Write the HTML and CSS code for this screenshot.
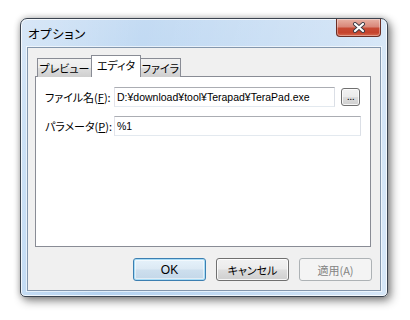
FILE: index.html
```html
<!DOCTYPE html>
<html lang="ja">
<head>
<meta charset="utf-8">
<link rel="stylesheet" href="styles.css">
</head>
<body>
<div class="window">
  <div class="titlebar">
    <span class="title">オプション</span>
    <div class="close">
      <svg width="14" height="11" viewBox="0 0 14 11">
        <path d="M3 2 L11 9 M11 2 L3 9" stroke="#3b3b45" stroke-width="4" stroke-linecap="round" fill="none"/>
        <path d="M3 2 L11 9 M11 2 L3 9" stroke="#ffffff" stroke-width="2.2" stroke-linecap="round" fill="none"/>
      </svg>
    </div>
  </div>
  <div class="client">
    <div class="tabs">
      <div class="tab tab-first">プレビュー</div>
      <div class="tab tab-active">エディタ</div>
      <div class="tab tab-last">ファイラ</div>
    </div>
    <div class="panel">
      <div class="form">
        <label class="lbl">ファイル名(<u>F</u>):</label>
        <div class="row">
          <div class="field field-short">D:¥download¥tool¥Terapad¥TeraPad.exe</div>
          <div class="btn btn-browse">...</div>
        </div>
        <label class="lbl">パラメータ(<u>P</u>):</label>
        <div class="row">
          <div class="field field-long">%1</div>
        </div>
      </div>
    </div>
    <div class="buttons">
      <div class="btn btn-default">OK</div>
      <div class="btn">キャンセル</div>
      <div class="btn btn-disabled">適用(A)</div>
    </div>
  </div>
</div>
</body>
</html>
```
FILE: styles.css
```css
html, body {
  margin: 0;
  padding: 0;
  background: #ffffff;
}
body {
  width: 410px;
  height: 320px;
  overflow: hidden;
  font-family: "Noto Sans CJK JP", "Liberation Sans", sans-serif;
  font-size: 12px;
  color: #000;
}
.window {
  margin: 18px 0 0 20px;
  width: 368px;
  height: 279px;
  box-sizing: border-box;
  border: 1px solid #3b4450;
  border-radius: 7px 7px 5px 5px;
  background:
    linear-gradient(100deg, rgba(255,255,255,0.35) 0%, rgba(255,255,255,0) 30%, rgba(255,255,255,0.25) 75%, rgba(255,255,255,0.45) 100%),
    linear-gradient(to bottom, #c4dbf3 0%, #b8d5f2 40%, #b5d3f1 100%);
  box-shadow: inset 0 0 0 1px rgba(255,255,255,0.75), 3px 4px 10px rgba(0,0,0,0.45), 0 0 6px rgba(0,0,0,0.25);
  padding: 0 6px 5px 6px;
  display: flex;
  flex-direction: column;
}
.titlebar {
  height: 28px;
  display: flex;
  align-items: flex-start;
  justify-content: space-between;
  flex: none;
}
.title {
  margin-top: 5px;
  margin-left: 1px;
  font-size: 12.5px;
  color: #000;
  font-feature-settings: "palt";
  letter-spacing: 0.6px;
}
.close {
  width: 45px;
  height: 18px;
  box-sizing: border-box;
  border: 1px solid #6b2e25;
  border-top: none;
  border-radius: 0 0 4px 4px;
  background: linear-gradient(to bottom, #e8b1a4 0%, #d9887a 45%, #c74a34 55%, #c5432c 80%, #d66a4f 100%);
  box-shadow: inset 0 0 0 1px rgba(255,255,255,0.35);
  display: flex;
  align-items: center;
  justify-content: center;
}
.close svg { display: block; }
.client {
  flex: 1;
  box-sizing: border-box;
  background: #f0f0f0;
  border: 1px solid #8497ad;
  box-shadow: 0 0 0 1px rgba(255,255,255,0.6);
  padding: 8px 9px 9px 7px;
  display: flex;
  flex-direction: column;
}
.tabs {
  display: flex;
  align-items: flex-end;
  height: 21px;
  padding-left: 2px;
  position: relative;
  z-index: 1;
  margin-bottom: -1px;
}
.tab {
  height: 19px;
  box-sizing: border-box;
  border: 1px solid #898c95;
  border-bottom: none;
  background: linear-gradient(to bottom, #f2f2f2 0%, #ebebeb 50%, #dddddd 51%, #cfcfcf 100%);
  font-size: 11px;
  font-feature-settings: "palt";
  line-height: 19px;
  text-align: center;
  margin-left: -1px;
  white-space: nowrap;
}
.tab-first { margin-left: 0; width: 55px; }
.tab-active {
  height: 22px;
  background: #ffffff;
  line-height: 19px;
  width: 50px;
  position: relative;
  z-index: 2;
}
.tab-last { width: 41px; }
.panel {
  height: 171px;
  box-sizing: border-box;
  border: 1px solid #898c95;
  background: #ffffff;
  padding: 10px 9px 0 9px;
}
.form {
  display: grid;
  grid-template-columns: 69px 1fr;
  row-gap: 9px;
  align-items: center;
}
.lbl {
  font-size: 11px;
  font-feature-settings: "palt";
  white-space: nowrap;
}
.lbl u { text-decoration-thickness: 1px; text-underline-offset: 1px; }
.row {
  display: flex;
  align-items: center;
  gap: 6px;
}
.field {
  height: 20px;
  box-sizing: border-box;
  border: 1px solid #dde1e6;
  border-top-color: #abadb3;
  border-left-color: #e2e3ea;
  border-right-color: #dbdfe6;
  border-bottom-color: #e3e9ef;
  background: #fff;
  font-family: "Liberation Sans", sans-serif;
  font-size: 10.5px;
  line-height: 18px;
  padding: 0 2px;
  white-space: nowrap;
}
.field-short { width: 221px; }
.field-long { width: 247px; }
.btn {
  width: 73px;
  height: 23px;
  box-sizing: border-box;
  border: 1px solid #707070;
  border-radius: 3px;
  background: linear-gradient(to bottom, #f2f2f2 0%, #ebebeb 48%, #dddddd 52%, #cfcfcf 100%);
  box-shadow: inset 0 0 0 1px rgba(255,255,255,0.8);
  display: flex;
  align-items: center;
  justify-content: center;
  font-size: 11px;
  font-feature-settings: "palt";
}
.btn-browse {
  width: 19px;
  height: 18px;
  font-family: "Liberation Sans", sans-serif;
  font-size: 11px;
  align-items: flex-end;
  padding-bottom: 3px;
  letter-spacing: -0.5px;
}
.buttons {
  display: flex;
  justify-content: flex-end;
  gap: 10px;
  margin-top: 11px;
  margin-right: -1px;
}
.btn-default {
  border-color: #3c7fb1;
  background: linear-gradient(to bottom, #e6f2fb 0%, #dce9f4 48%, #cddfee 52%, #c3d7e8 100%);
  box-shadow: inset 0 0 0 1px #a8dcf6, inset 0 0 0 2px rgba(255,255,255,0.5);
  font-family: "Liberation Sans", sans-serif;
  font-size: 12px;
}
.btn-disabled {
  border-color: #adb2b5;
  background: #f4f4f4;
  box-shadow: none;
  color: #838383;
}
```
